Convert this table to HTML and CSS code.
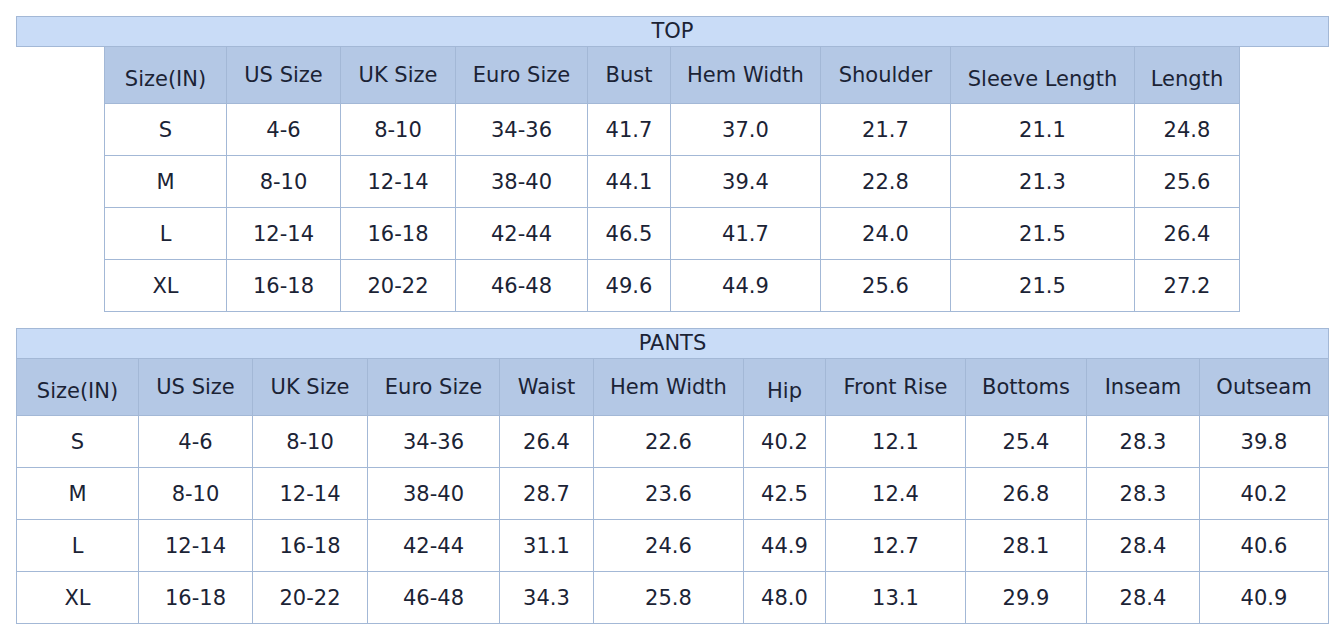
FILE: index.html
```html
<!DOCTYPE html>
<html>
<head>
<meta charset="utf-8">
<link rel="stylesheet" href="styles.css">
</head>
<body>
<div class="chart">
  <div class="title">TOP</div>
  <table class="tbl top">
    <colgroup>
      <col style="width:122px"><col style="width:114px"><col style="width:115px"><col style="width:132px"><col style="width:83px"><col style="width:150px"><col style="width:130px"><col style="width:184px"><col style="width:105px">
    </colgroup>
    <thead>
      <tr><th class="lo">Size(IN)</th><th>US Size</th><th>UK Size</th><th>Euro Size</th><th>Bust</th><th>Hem Width</th><th>Shoulder</th><th class="lo">Sleeve Length</th><th class="lo">Length</th></tr>
    </thead>
    <tbody>
      <tr><td>S</td><td>4-6</td><td>8-10</td><td>34-36</td><td>41.7</td><td>37.0</td><td>21.7</td><td>21.1</td><td>24.8</td></tr>
      <tr><td>M</td><td>8-10</td><td>12-14</td><td>38-40</td><td>44.1</td><td>39.4</td><td>22.8</td><td>21.3</td><td>25.6</td></tr>
      <tr><td>L</td><td>12-14</td><td>16-18</td><td>42-44</td><td>46.5</td><td>41.7</td><td>24.0</td><td>21.5</td><td>26.4</td></tr>
      <tr><td>XL</td><td>16-18</td><td>20-22</td><td>46-48</td><td>49.6</td><td>44.9</td><td>25.6</td><td>21.5</td><td>27.2</td></tr>
    </tbody>
  </table>
</div>
<div class="chart pants-chart">
  <div class="title">PANTS</div>
  <table class="tbl pants">
    <colgroup>
      <col style="width:122px"><col style="width:114px"><col style="width:115px"><col style="width:132px"><col style="width:94px"><col style="width:150px"><col style="width:82px"><col style="width:140px"><col style="width:121px"><col style="width:113px"><col style="width:129px">
    </colgroup>
    <thead>
      <tr><th class="lo">Size(IN)</th><th>US Size</th><th>UK Size</th><th>Euro Size</th><th>Waist</th><th>Hem Width</th><th class="lo">Hip</th><th>Front Rise</th><th>Bottoms</th><th>Inseam</th><th>Outseam</th></tr>
    </thead>
    <tbody>
      <tr><td>S</td><td>4-6</td><td>8-10</td><td>34-36</td><td>26.4</td><td>22.6</td><td>40.2</td><td>12.1</td><td>25.4</td><td>28.3</td><td>39.8</td></tr>
      <tr><td>M</td><td>8-10</td><td>12-14</td><td>38-40</td><td>28.7</td><td>23.6</td><td>42.5</td><td>12.4</td><td>26.8</td><td>28.3</td><td>40.2</td></tr>
      <tr><td>L</td><td>12-14</td><td>16-18</td><td>42-44</td><td>31.1</td><td>24.6</td><td>44.9</td><td>12.7</td><td>28.1</td><td>28.4</td><td>40.6</td></tr>
      <tr><td>XL</td><td>16-18</td><td>20-22</td><td>46-48</td><td>34.3</td><td>25.8</td><td>48.0</td><td>13.1</td><td>29.9</td><td>28.4</td><td>40.9</td></tr>
    </tbody>
  </table>
</div>
</body>
</html>
```
FILE: styles.css
```css
html, body {
  margin: 0;
  padding: 0;
  background: #ffffff;
}
body {
  padding: 16px 16px 0 16px;
  font-family: "DejaVu Sans", Verdana, sans-serif;
  font-size: 21px;
  color: #1b2335;
}
.chart {
  width: 1313px;
}
.pants-chart {
  margin-top: 16px;
}
.title {
  box-sizing: border-box;
  height: 31px;
  border: 1px solid #a3b8d6;
  background: #c9dcf7;
  text-align: center;
  line-height: 29px;
  font-size: 21px;
}
.tbl {
  border-collapse: separate;
  border-spacing: 0;
  table-layout: fixed;
  border-left: 1px solid #a3b8d6;
}
.tbl.top {
  width: 1136px;
  margin-left: 88px;
}
.tbl.pants {
  width: 1313px;
}
.tbl th, .tbl td {
  border-right: 1px solid #a3b8d6;
  border-bottom: 1px solid #a3b8d6;
  text-align: center;
  vertical-align: middle;
  padding: 0;
  white-space: nowrap;
}
.tbl thead th {
  background: #b4c8e5;
  font-weight: normal;
  height: 55px;
  padding-bottom: 1px;
  box-sizing: content-box;
}
.tbl thead th.lo {
  padding-top: 7px;
  padding-bottom: 0;
  height: 49px;
}
.tbl td {
  height: 51px;
}
```
